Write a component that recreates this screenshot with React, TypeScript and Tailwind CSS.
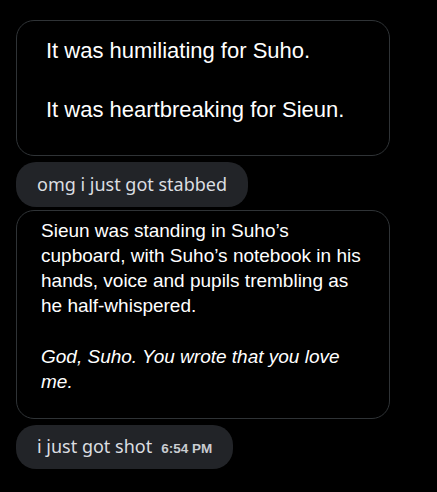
export default function App() {
  return (
    <div className="min-h-[492px] w-[437px] bg-black pl-4 pt-5">
      <div className="flex flex-col items-start">
        <div className="w-[374px] rounded-[18px] border border-[#2f3336] pl-[29px] pr-4 pt-[15px] pb-[30px] text-[22px] leading-[29.5px] text-white font-['Liberation_Sans',Arial,sans-serif]">
          <p>It was humiliating for Suho.</p>
          <p className="mt-[29.5px]">It was heartbreaking for Sieun.</p>
        </div>
        <div className="mt-[6px] flex h-[45px] items-center rounded-[20px] bg-[#222428] px-[21px] text-[18px] text-[#dbdee1] font-['Noto_Sans',sans-serif]">
          omg i just got stabbed
        </div>
        <div className="mt-[3px] w-[374px] rounded-[18px] border border-[#2f3336] pl-[24px] pr-[22px] pt-[7px] pb-[23px] text-[19px] leading-[25.3px] text-white font-['Liberation_Sans',Arial,sans-serif]">
          <p>Sieun was standing in Suho’s cupboard, with Suho’s notebook in his hands, voice and pupils trembling as he half-whispered.</p>
          <p className="mt-[25.3px] italic">God, Suho. You wrote that you love me.</p>
        </div>
        <div className="mt-[6px] flex h-[44px] items-center rounded-[20px] bg-[#222428] px-[21px] text-[#dbdee1]">
          <span className="text-[18px] font-['Noto_Sans',sans-serif]">i just got shot</span>
          <span className="ml-[9px] mt-[6px] text-[13.5px] font-semibold text-[#c9ccd1] font-['Liberation_Sans',Arial,sans-serif]">6:54 PM</span>
        </div>
      </div>
    </div>
  );
}
